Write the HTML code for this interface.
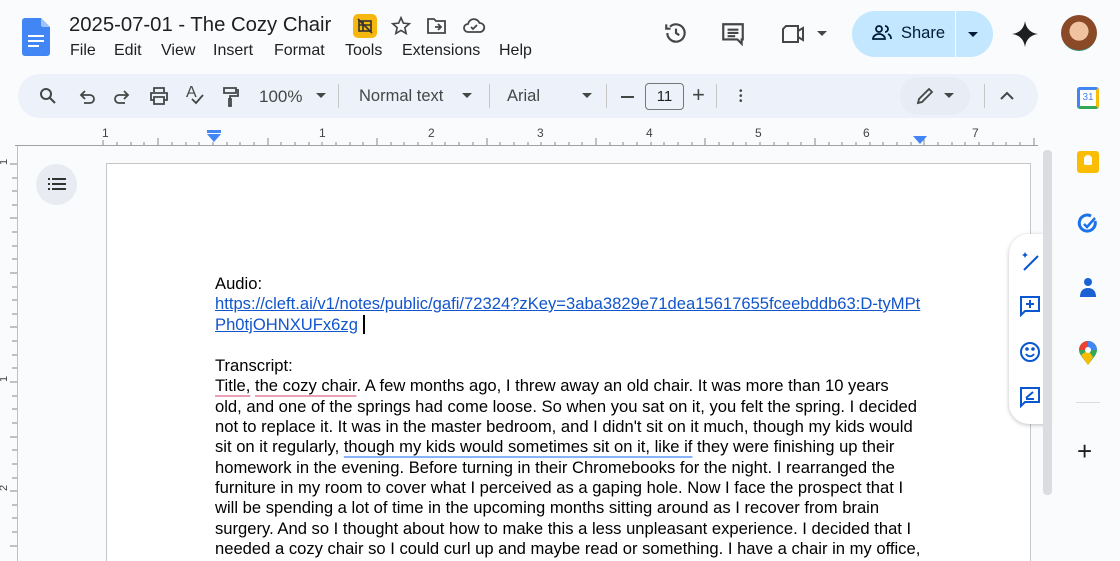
<!DOCTYPE html>
<html><head><meta charset="utf-8"><style>
*{box-sizing:border-box;margin:0;padding:0}
html,body{width:1120px;height:561px;overflow:hidden}
body{background:#f9fbfd;font-family:"Liberation Sans",Arial,sans-serif;position:relative;color:#1f1f1f}
.a{position:absolute}
.tb{left:18px;top:74px;width:1020px;height:44px;background:#edf2fa;border-radius:22px}
.ic{position:absolute;color:#444746}
.page{left:106px;top:163px;width:925px;height:398px;background:#fff;border:1px solid #c7c7c7;border-bottom:0}
.ln{position:absolute;left:215px;font-size:16.6px;white-space:nowrap;color:#000;line-height:20px}
.lk{color:#1155cc;text-decoration:underline}
.rs{text-decoration:underline;text-decoration-color:#e8a0b4;text-decoration-thickness:2px;text-underline-offset:4px}
.bs{text-decoration:underline;text-decoration-color:#8ab4f8;text-decoration-thickness:2px;text-underline-offset:4px}
.rn{position:absolute;top:126px;font-size:12px;color:#444}
.m{position:absolute;top:42px;font-size:16px;color:#1f1f1f}
</style></head><body>
<svg class="a" style="left:22px;top:18px" width="28" height="38" viewBox="0 0 28 38"><path d="M3 0h16l9 9v26a3 3 0 0 1-3 3H3a3 3 0 0 1-3-3V3a3 3 0 0 1 3-3z" fill="#4285f4"/><path d="M19 0l9 9h-7a2 2 0 0 1-2-2z" fill="#a1c2fa"/><rect x="6" y="17" width="16" height="2" fill="#fff"/><rect x="6" y="22" width="16" height="2" fill="#fff"/><rect x="6" y="27" width="11" height="2" fill="#fff"/></svg>
<div class="a" style="left:69px;top:14px;font-size:20.3px;color:#1f1f1f">2025-07-01 - The Cozy Chair</div>
<div class="a" style="left:353px;top:14px;width:24px;height:24px;background:#f6b70f;border-radius:5px"></div>
<svg class="a" style="left:356px;top:17px" width="18" height="18" viewBox="0 0 18 18" fill="none" stroke="#333" stroke-width="1.6"><rect x="3" y="4" width="12" height="10"/><path d="M3 8h12M7 4v10M2 2l14 14"/></svg>
<svg class="a" style="left:390px;top:15px" width="22" height="22" viewBox="0 0 24 24" fill="none" stroke="#444746" stroke-width="1.8"><path d="M12 3l2.6 5.9 6.4.6-4.8 4.3 1.4 6.3L12 16.8 6.4 20.1l1.4-6.3L3 9.5l6.4-.6z"/></svg>
<svg class="a" style="left:426px;top:16px" width="22" height="20" viewBox="0 0 22 20" fill="none" stroke="#444746" stroke-width="1.8"><path d="M2 3h6l2 2h9v12H2z"/><path d="M9 11h6M12 8l3 3-3 3"/></svg>
<svg class="a" style="left:462px;top:16px" width="24" height="20" viewBox="0 0 24 20" fill="none" stroke="#444746" stroke-width="1.8"><path d="M6 16a4 4 0 0 1 0-8 6 6 0 0 1 11.5-1A4.5 4.5 0 0 1 18 16z"/><path d="M9 11l2 2 4-4"/></svg>
<div class="m" style="left:70px">File</div><div class="m" style="left:114px">Edit</div><div class="m" style="left:161px">View</div><div class="m" style="left:213px">Insert</div><div class="m" style="left:274px">Format</div><div class="m" style="left:345px">Tools</div><div class="m" style="left:402px">Extensions</div><div class="m" style="left:499px">Help</div>
<svg class="a" style="left:663px;top:20px" width="26" height="26" viewBox="0 0 24 24" fill="none" stroke="#444746" stroke-width="2"><path d="M4 12a8 8 0 1 0 2.5-5.8M3 4v4h4"/><path d="M12 8v4l3 2"/></svg>
<svg class="a" style="left:720px;top:21px" width="26" height="26" viewBox="0 0 24 24" fill="none" stroke="#444746" stroke-width="2"><path d="M3 3h18v14h-1v4l-4-4H3z"/><path d="M7 8h10M7 11h10M7 14h7"/></svg>
<svg class="a" style="left:781px;top:23px" width="26" height="22" viewBox="0 0 26 22" fill="none" stroke="#444746" stroke-width="2"><path d="M5 3h12v16H2V6z"/><path d="M17 8l5-3v12l-5-3"/></svg>
<div class="a" style="left:817px;top:31px;border:5px solid transparent;border-top-color:#444746"></div>
<div class="a" style="left:852px;top:11px;width:141px;height:46px;background:#c2e7ff;border-radius:23px"></div>
<div class="a" style="left:955px;top:11px;width:1px;height:46px;background:#f9fbfd"></div>
<svg class="a" style="left:871px;top:24px" width="22" height="18" viewBox="0 0 22 18" fill="none" stroke="#001d35" stroke-width="1.8"><circle cx="8" cy="5" r="3"/><path d="M2 15c0-3 3-5 6-5s6 2 6 5zM14 2a3 3 0 0 1 0 6M17 10c2 1 3 2 3 5"/></svg>
<div class="a" style="left:901px;top:24px;font-size:16.5px;color:#001d35">Share</div>
<div class="a" style="left:968px;top:32px;border:5px solid transparent;border-top-color:#001d35"></div>
<svg class="a" style="left:1012px;top:21px" width="26" height="26" viewBox="0 0 24 24"><path d="M12 0C13 7 17 11 24 12 17 13 13 17 12 24 11 17 7 13 0 12 7 11 11 7 12 0z" fill="#1f1f1f"/></svg>
<div class="a" style="left:1061px;top:15px;width:36px;height:36px;border-radius:50%;background:radial-gradient(circle at 50% 45%,#f0c2a0 0 35%,#8a4a28 36% 70%,#2d8a7a 71%)"></div>
<div class="a tb"></div>
<svg class="ic" style="left:38px;top:86px" width="20" height="20" viewBox="0 0 20 20" fill="none" stroke="#444746" stroke-width="2"><circle cx="8" cy="8" r="5"/><path d="M12 12l5 5"/></svg>
<svg class="ic" style="left:78px;top:88px" width="18" height="18" viewBox="0 0 18 18" fill="none" stroke="#444746" stroke-width="1.8"><path d="M4 7h8a4 4 0 0 1 0 8H6M7 3L3 7l4 4"/></svg>
<svg class="ic" style="left:113px;top:88px" width="18" height="18" viewBox="0 0 18 18" fill="none" stroke="#444746" stroke-width="1.8"><path d="M14 7H6a4 4 0 0 0 0 8h6M11 3l4 4-4 4"/></svg>
<svg class="ic" style="left:148px;top:86px" width="22" height="20" viewBox="0 0 22 20" fill="none" stroke="#444746" stroke-width="1.8"><path d="M6 6V2h10v4M6 14H3V7h16v7h-3M6 11h10v7H6z"/></svg>
<div class="ic" style="left:186px;top:84px;font-size:16px">A</div>
<svg class="ic" style="left:190px;top:94px" width="14" height="12" viewBox="0 0 14 12" fill="none" stroke="#444746" stroke-width="1.8"><path d="M2 5l4 4 7-8"/></svg>
<svg class="ic" style="left:221px;top:86px" width="20" height="22" viewBox="0 0 20 22" fill="none" stroke="#444746" stroke-width="1.8"><path d="M3 2h12v5H3zM15 4h2v6H9v3M8 13h2v7H8z"/></svg>
<div class="ic" style="left:259px;top:87px;font-size:17px">100%</div>
<div class="ic" style="left:316px;top:93px;border:5px solid transparent;border-top-color:#444746"></div>
<div class="a" style="left:338px;top:84px;width:1px;height:24px;background:#c7c7c7"></div>
<div class="ic" style="left:359px;top:87px;font-size:16.5px">Normal text</div>
<div class="ic" style="left:462px;top:93px;border:5px solid transparent;border-top-color:#444746"></div>
<div class="a" style="left:489px;top:84px;width:1px;height:24px;background:#c7c7c7"></div>
<div class="ic" style="left:507px;top:87px;font-size:16.5px">Arial</div>
<div class="ic" style="left:582px;top:93px;border:5px solid transparent;border-top-color:#444746"></div>
<div class="a" style="left:606px;top:84px;width:1px;height:24px;background:#c7c7c7"></div>
<div class="a" style="left:621px;top:96px;width:13px;height:2px;background:#444746"></div>
<div class="a" style="left:645px;top:83px;width:39px;height:27px;border:1px solid #747775;border-radius:4px;font-size:15px;text-align:center;line-height:25px;color:#1f1f1f">11</div>
<div class="ic" style="left:692px;top:82px;font-size:22px">+</div>
<div class="a" style="left:716px;top:84px;width:1px;height:24px;background:#c7c7c7"></div>
<div class="ic" style="left:739px;top:89px;width:4px;line-height:5px;font-size:10px">•<br>•<br>•</div>
<div class="a" style="left:900px;top:77px;width:70px;height:38px;background:#e8edf5;border-radius:19px"></div>
<svg class="ic" style="left:915px;top:86px" width="20" height="20" viewBox="0 0 20 20" fill="none" stroke="#444746" stroke-width="1.8"><path d="M3 17l1-4L14 3l3 3L7 16z"/></svg>
<div class="ic" style="left:944px;top:93px;border:5px solid transparent;border-top-color:#444746"></div>
<div class="a" style="left:984px;top:84px;width:1px;height:24px;background:#c7c7c7"></div>
<svg class="ic" style="left:998px;top:89px" width="18" height="14" viewBox="0 0 18 14" fill="none" stroke="#444746" stroke-width="2"><path d="M3 10l6-6 6 6"/></svg>
<div class="a" style="left:1077px;top:87px;width:22px;height:22px;background:#fff;border:3px solid #4285f4;border-bottom-color:#34a853;border-right-color:#fbbc04;border-radius:3px;font-size:10px;color:#4285f4;text-align:center;line-height:16px">31</div>
<div class="a" style="left:15px;top:145px;width:1023px;height:1px;background:#a0a0a0"></div>
<svg class="a" style="left:100px;top:133px" width="940" height="12">
<g stroke="#888" stroke-width="1">
<path d="M3 7v5M17 9v3M31 9v3M44 9v3M58 5v7M72 9v3M86 9v3M99 9v3M113 9v3M127 9v3M140 9v3M154 9v3M168 5v7M181 9v3M195 9v3M209 9v3M222 9v3M236 9v3M250 9v3M263 9v3M277 5v7M291 9v3M304 9v3M318 9v3M332 9v3M345 9v3M359 9v3M373 9v3M387 5v7M400 9v3M414 9v3M428 9v3M441 9v3M455 9v3M469 9v3M482 9v3M496 5v7M510 9v3M523 9v3M537 9v3M551 9v3M564 9v3M578 9v3M592 9v3M605 5v7M619 9v3M633 9v3M646 9v3M660 9v3M674 9v3M688 9v3M701 9v3M715 5v7M729 9v3M742 9v3M756 9v3M770 9v3M783 9v3M797 9v3M811 9v3M824 5v7M838 9v3M852 9v3M865 9v3M879 9v3M893 9v3M906 9v3M920 9v3M934 5v7"/></g></svg>
<div class="rn" style="left:102px">1</div><div class="rn" style="left:319px">1</div><div class="rn" style="left:428px">2</div><div class="rn" style="left:537px">3</div><div class="rn" style="left:646px">4</div><div class="rn" style="left:755px">5</div><div class="rn" style="left:863px">6</div><div class="rn" style="left:972px">7</div>
<div class="a" style="left:207px;top:130px;width:14px;height:3px;background:#4285f4"></div>
<div class="a" style="left:207px;top:134px;border:7px solid transparent;border-top:8px solid #4285f4;border-bottom:0"></div>
<div class="a" style="left:913px;top:136px;border:7px solid transparent;border-top:8px solid #4285f4;border-bottom:0"></div>
<div class="a" style="left:17px;top:146px;width:1px;height:415px;background:#c0c0c0"></div>
<svg class="a" style="left:0;top:150px" width="17" height="411"><g stroke="#888"><path d="M10 14h7M12 28h5M12 41h5M12 55h5M10 68h7M12 82h5M12 96h5M12 109h5M10 123h7M12 137h5M12 150h5M12 164h5M10 177h7M12 191h5M12 205h5M12 218h5M10 232h7M12 246h5M12 259h5M12 273h5M10 287h7M12 300h5M12 314h5M12 328h5M10 341h7M12 355h5M12 368h5M12 382h5M10 396h7"/></g>
<text x="4" y="16" font-size="11" fill="#444" transform="rotate(-90 5 14)">1</text>
<text x="4" y="233" font-size="11" fill="#444" transform="rotate(-90 5 231)">1</text>
<text x="4" y="342" font-size="11" fill="#444" transform="rotate(-90 5 340)">2</text></svg>
<div class="a" style="left:36px;top:164px;width:41px;height:41px;border-radius:50%;background:#e9ebf3"></div>
<svg class="a" style="left:48px;top:177px" width="18" height="14" viewBox="0 0 18 14" fill="#333"><rect x="0" y="1" width="2" height="2"/><rect x="4" y="1" width="14" height="2"/><rect x="0" y="6" width="2" height="2"/><rect x="4" y="6" width="14" height="2"/><rect x="0" y="11" width="2" height="2"/><rect x="4" y="11" width="14" height="2"/></svg>
<div class="a page"></div>
<div class="ln" style="top:274px">Audio:</div>
<div class="ln lk" style="top:294px">https://cleft.ai/v1/notes/public/gafi/72324?zKey=3aba3829e71dea15617655fceebddb63:D-tyMPt</div>
<div class="ln" style="top:315px"><span class="lk">Ph0tjOHNXUFx6zg</span> <span style="display:inline-block;width:2px;height:19px;background:#000;vertical-align:-4px"></span></div>
<div class="ln" style="top:356px">Transcript:</div>
<div class="ln" style="top:376px"><span class="rs">Title,</span> <span class="rs">the cozy chair</span>. A few months ago, I threw away an old chair. It was more than 10 years</div>
<div class="ln" style="top:397px">old, and one of the springs had come loose. So when you sat on it, you felt the spring. I decided</div>
<div class="ln" style="top:417px">not to replace it. It was in the master bedroom, and I didn't sit on it much, though my kids would</div>
<div class="ln" style="top:437px">sit on it regularly, <span class="bs">though my kids would sometimes sit on it, like if</span> they were finishing up their</div>
<div class="ln" style="top:458px">homework in the evening. Before turning in their Chromebooks for the night. I rearranged the</div>
<div class="ln" style="top:478px">furniture in my room to cover what I perceived as a gaping hole. Now I face the prospect that I</div>
<div class="ln" style="top:498px">will be spending a lot of time in the upcoming months sitting around as I recover from brain</div>
<div class="ln" style="top:519px">surgery. And so I thought about how to make this a less unpleasant experience. I decided that I</div>
<div class="ln" style="top:539px">needed a cozy chair so I could curl up and maybe read or something. I have a chair in my office,</div>
<div class="a" style="left:1009px;top:234px;width:40px;height:190px;background:#fff;border-radius:20px 0 0 20px;box-shadow:0 1px 4px rgba(0,0,0,.25)"></div>
<svg class="a" style="left:1019px;top:250px" width="22" height="22" viewBox="0 0 22 22" fill="none" stroke="#0b57d0" stroke-width="2"><path d="M5 20L19 6M9 20h0"/><path d="M6 2l1 2 2 1-2 1-1 2-1-2-2-1 2-1z" fill="#0b57d0" stroke="none"/></svg>
<svg class="a" style="left:1019px;top:295px" width="22" height="22" viewBox="0 0 22 22" fill="none" stroke="#0b57d0" stroke-width="2"><path d="M2 2h18v14H6l-4 4z"/><path d="M11 5v8M7 9h8"/></svg>
<svg class="a" style="left:1019px;top:341px" width="22" height="22" viewBox="0 0 22 22" fill="none" stroke="#0b57d0" stroke-width="2"><circle cx="11" cy="11" r="9"/><path d="M7 13c2 3 6 3 8 0"/><circle cx="8" cy="8" r=".8" fill="#0b57d0"/><circle cx="14" cy="8" r=".8" fill="#0b57d0"/></svg>
<svg class="a" style="left:1019px;top:386px" width="22" height="22" viewBox="0 0 22 22" fill="none" stroke="#0b57d0" stroke-width="2"><path d="M2 2h18v14H6l-4 4z"/><path d="M7 12l7-6M7 13h8"/></svg>
<div class="a" style="left:1043px;top:150px;width:9px;height:345px;background:#dadce0;border-radius:4px"></div>
<div class="a" style="left:1077px;top:151px;width:22px;height:22px;background:#fbbc04;border-radius:3px"></div>
<div class="a" style="left:1084px;top:155px;width:8px;height:10px;background:#fff;border-radius:4px 4px 2px 2px"></div>
<svg class="a" style="left:1077px;top:213px" width="22" height="22" viewBox="0 0 22 22" fill="none" stroke="#1a73e8" stroke-width="3"><path d="M18 8a8 8 0 1 1-4-5"/><path d="M7 11l3 3 8-9" stroke-width="2.5"/></svg>
<svg class="a" style="left:1079px;top:277px" width="18" height="22" viewBox="0 0 18 22" fill="#1a62d3"><circle cx="9" cy="5" r="4"/><path d="M1 20c0-6 3-9 8-9s8 3 8 9z"/></svg>
<svg class="a" style="left:1079px;top:341px" width="18" height="24" viewBox="0 0 18 24"><path d="M9 0a9 9 0 0 1 9 9c0 5-5 9-9 15C5 18 0 14 0 9a9 9 0 0 1 9-9z" fill="#34a853"/><path d="M9 0a9 9 0 0 1 9 9H9z" fill="#4285f4"/><path d="M0 9a9 9 0 0 1 9-9v9z" fill="#ea4335"/><path d="M2 14l7-5 5 7-5 8z" fill="#fbbc04"/><circle cx="9" cy="9" r="3" fill="#fff"/></svg>
<div class="a" style="left:1076px;top:402px;width:24px;height:1px;background:#dadce0"></div>
<div class="a" style="left:1077px;top:438px;font-size:26px;color:#1f1f1f;line-height:26px">+</div>
</body></html>
